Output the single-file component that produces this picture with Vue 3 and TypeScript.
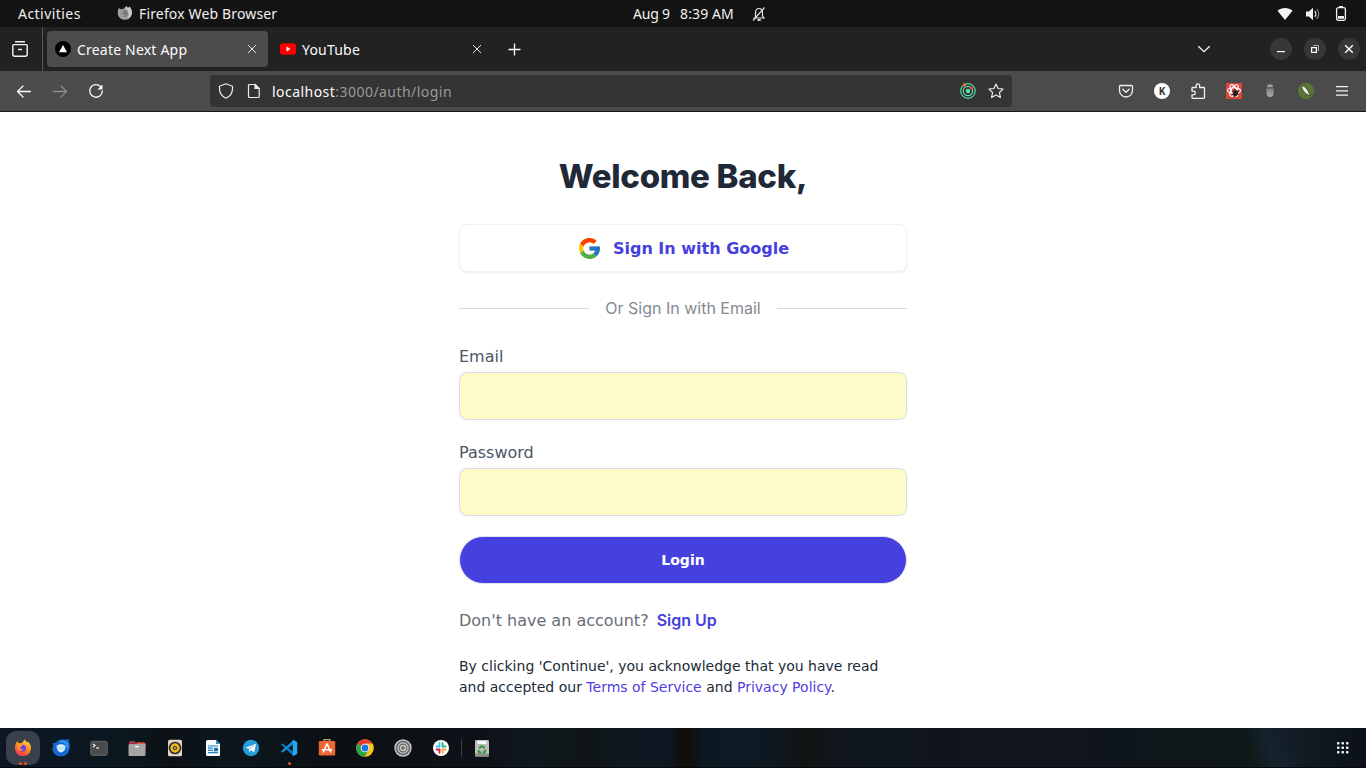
<script setup lang="ts">
import { ref } from 'vue'

interface Tab {
  title: string
  kind: 'next' | 'youtube'
  active: boolean
}

interface DockApp {
  name: string
  dots: number
}

const tabs: Tab[] = [
  { title: 'Create Next App', kind: 'next', active: true },
  { title: 'YouTube', kind: 'youtube', active: false },
]

const dockApps: DockApp[] = [
  { name: 'firefox', dots: 2 },
  { name: 'thunderbird', dots: 0 },
  { name: 'terminal', dots: 0 },
  { name: 'files', dots: 0 },
  { name: 'rhythmbox', dots: 0 },
  { name: 'writer', dots: 0 },
  { name: 'telegram', dots: 0 },
  { name: 'code', dots: 1 },
  { name: 'software', dots: 0 },
  { name: 'chrome', dots: 0 },
  { name: 'settings', dots: 0 },
  { name: 'slack', dots: 0 },
]

const email = ref('')
const password = ref('')
</script>

<template>
  <div class="desktop">
    <header class="topbar">
      <span class="activities">Activities</span>
      <svg class="appicon" width="16" height="16" viewBox="0 0 16 16">
        <path d="M2.200 2.500c.2 1 .6 1.400 1 1.800 1-.4 1.800-.4 2.600 0C7 3.500 8 2.300 10 1c0 1 .5 1.700 1 2.200l1.500-1.700c2.500 3 3 6 2 8.500A7.200 7.200 0 0 1 1 10C.3 7 .9 4.500 2.200 2.500z" fill="#a2a2a2" />
        <path d="M10 1c0 1 .5 1.700 1 2.200l1.500-1.700c2.500 3 3 6 2 8.500-1 2-2.500 3.500-4 4C13 10 12 6 8 3z" fill="#c8c8c8" />
        <circle cx="7.500" cy="8.500" r="3.400" fill="#777" />
        <path d="M3 5.500c2-.8 3.500-.3 4.500.8-.5 1-2 1-2.200 2 .5 1.500 2 2.200 4 1.700C8 12 4.500 12 3.200 9.500z" fill="#999" />
      </svg>
      <span class="appname">Firefox Web Browser</span>
      <span class="date">Aug 9</span>
      <span class="time">8:39 AM</span>
      <svg class="bell" width="16" height="16" viewBox="0 0 16 16" fill="none" stroke="#e8e8e8">
        <path d="M2.500 12h11.500M4.500 11.500V7c0-3 1.500-4.500 3.500-4.500S11.500 4 11.500 7v3l1 1.500" stroke-width="1.200" />
        <path d="M2 14.500 13.500 1.500" stroke-width="1.200" />
        <path d="M6.500 14h3.200" stroke-width="1.800" />
      </svg>
      <div class="status">
        <svg width="16" height="16" viewBox="0 0 16 16"><path d="M.5 4.800C4.500 1 11.500 1 15.500 4.800L8 14z" fill="#f3f3f3" /></svg>
        <svg width="16" height="16" viewBox="0 0 16 16">
          <path d="M1 5.500h3L8 1.700v12.600l-4-3.800H1z" fill="#f3f3f3" />
          <path d="M9.700 5.300c1.500 1.500 1.500 3.900 0 5.400" fill="none" stroke="#eee" stroke-width="1.300" />
          <path d="M11.700 3.200c2.700 2.700 2.700 6.900 0 9.600" fill="none" stroke="#888" stroke-width="1.200" />
        </svg>
        <svg width="16" height="16" viewBox="0 0 16 16">
          <rect x="3.600" y="1.600" width="8.800" height="12.800" rx="1.800" fill="none" stroke="#f3f3f3" stroke-width="1.300" />
          <path d="M6 0h4v1.500H6zM5 10h6v2.700H5z" fill="#f3f3f3" />
        </svg>
      </div>
    </header>

    <nav class="tabstrip">
      <div class="firefoxview">
        <svg width="18" height="18" viewBox="0 0 18 18" fill="none" stroke="#f3f3f3" stroke-width="1.400">
          <path d="M4.500 1.800h9M2.800 4.600h12.400a1 1 0 0 1 1 1v8.600a2 2 0 0 1-2 2H3.800a2 2 0 0 1-2-2V5.600a1 1 0 0 1 1-1z" stroke-linejoin="round" stroke-linecap="round" />
          <path d="M7 9.500h4" />
        </svg>
      </div>
      <div v-for="tab in tabs" :key="tab.title" class="tab" :class="{ active: tab.active }">
        <svg v-if="tab.kind === 'next'" width="16" height="16" viewBox="0 0 16 16">
          <circle cx="8" cy="8" r="8" fill="#000" />
          <path d="M8 4l4 7.200H4z" fill="#fff" />
        </svg>
        <svg v-else width="16" height="16" viewBox="0 0 16 16">
          <rect x="0" y="2.300" width="16" height="11.400" rx="3" fill="#f00" />
          <path d="M6.500 5.600v4.800L10.600 8z" fill="#fff" />
        </svg>
        <span class="tabtitle" :class="tab.kind">{{ tab.title }}</span>
        <svg class="close" width="10" height="10" viewBox="0 0 10 10" stroke="#e6e6e6" stroke-width="1"><path d="M1 1l8 8M9 1L1 9" /></svg>
      </div>
      <svg class="newtab" width="14" height="14" viewBox="0 0 14 14" stroke="#fff" stroke-width="1.300"><path d="M6.500 1.500v12M.5 7.500h12" /></svg>
      <svg class="chevron" width="14" height="14" viewBox="0 0 14 14" fill="none" stroke="#f5f5f5" stroke-width="1.300"><path d="M1.300 4.200 7 9.600l5.700-5.400" /></svg>
      <div class="wincontrols">
        <span class="winbtn"><svg width="10" height="10" viewBox="0 0 10 10"><path d="M1 7h8v1.200H1z" fill="#fff" /></svg></span>
        <span class="winbtn"><svg width="10" height="10" viewBox="0 0 10 10" fill="none"><path d="M3 1.500h5.500V7" stroke="#aaa" /><path d="M1.600 3.600h4.800v4.800H1.600z" stroke="#fff" stroke-width="1.200" /></svg></span>
        <span class="winbtn"><svg width="10" height="10" viewBox="0 0 10 10" stroke="#fff" stroke-width="1.400"><path d="M1.200 1.200l7.600 7.600M8.800 1.200L1.200 8.800" /></svg></span>
      </div>
    </nav>

    <div class="toolbar">
      <div class="navbtns">
        <svg width="16" height="16" viewBox="0 0 16 16" fill="none" stroke="#fbfbfb" stroke-width="1.300" stroke-linecap="round" stroke-linejoin="round"><path d="M14.500 8.500H1.500M7 3 1.500 8.500 7 14" /></svg>
        <svg width="16" height="16" viewBox="0 0 16 16" fill="none" stroke="#8d8d8d" stroke-width="1.300" stroke-linecap="round" stroke-linejoin="round"><path d="M1.500 8.500h13M9 3 14.500 8.500 9 14" /></svg>
        <svg width="16" height="16" viewBox="0 0 16 16" fill="none"><path d="M12.500 3.500A6.300 6.300 0 1 0 14.300 8" stroke="#fbfbfb" stroke-width="1.300" stroke-linecap="round" /><path d="M14.500 1.500v5h-5z" fill="#fbfbfb" /></svg>
      </div>
      <div class="urlbar">
        <svg width="16" height="16" viewBox="0 0 16 16" fill="none" stroke="#ececec" stroke-width="1.200" stroke-linejoin="round"><path d="M8 .8 14.500 3.200v2.300c0 4.700-2.700 8-6.500 9.700C4.200 13.500 1.500 10.200 1.500 5.500V3.200z" /></svg>
        <svg class="pageicon" width="16" height="16" viewBox="0 0 16 16" fill="none" stroke="#ececec" stroke-width="1.200" stroke-linejoin="round"><path d="M3.500 1.500h5.700l4 4v8a1 1 0 0 1-1 1H3.500a1 1 0 0 1-1-1v-11a1 1 0 0 1 1-1z" /><path d="M9 1.500v4h4z" fill="#ececec" /></svg>
        <span class="url"><b>localhost</b>:3000/auth/login</span>
        <svg class="radar" width="16" height="16" viewBox="0 0 16 16" fill="none">
          <circle cx="8" cy="8" r="7.300" stroke="#55d69a" stroke-width="1.200" />
          <circle cx="8" cy="8" r="4.700" stroke="#58dfb0" stroke-width="1.200" />
          <circle cx="8" cy="8" r="2.200" fill="#54e8ac" />
          <circle cx="4.500" cy="1.900" r="1.600" fill="#f37021" /><circle cx="11.400" cy="5" r="1.600" fill="#ef4b32" />
        </svg>
        <svg width="16" height="16" viewBox="0 0 16 16" fill="none" stroke="#ececec" stroke-width="1.200" stroke-linejoin="round"><path d="M8 1l2.100 4.500 5 .6-3.700 3.400 1 5L8 12l-4.400 2.500 1-5L.9 6.100l5-.6z" /></svg>
      </div>
      <div class="extensions">
        <span class="cell"><svg width="16" height="16" viewBox="0 0 16 16" fill="none" stroke="#f3f3f3" stroke-width="1.300" stroke-linecap="round" stroke-linejoin="round"><path d="M2.500 2.500h11a1 1 0 0 1 1 1V7.500a6.500 6.500 0 0 1-13 0V3.500a1 1 0 0 1 1-1z" /><path d="M4.800 6.300 8 9.300l3.200-3" /></svg></span>
        <span class="cell"><span class="kbadge">K</span></span>
        <span class="cell"><svg width="16" height="16" viewBox="0 0 16 16" fill="none" stroke="#f3f3f3" stroke-width="1.300" stroke-linejoin="round"><path d="M2 6.800V5.300a.8.800 0 0 1 .8-.8h3.400V2.500a1.700 1.700 0 0 1 3.400 0v2h4.100a.8.800 0 0 1 .8.800v9.200a.8.800 0 0 1-.8.800H2.800a.8.800 0 0 1-.8-.8v-2.700h1.500a1.800 1.800 0 0 0 0-3.600H2z" /></svg></span>
        <span class="cell"><svg width="16" height="16" viewBox="0 0 16 16" fill="none"><path d="M0 0h16v16H0z" fill="#d9473a" /><g stroke="#fff" stroke-width="1.100"><ellipse cx="8" cy="7.500" rx="6.500" ry="2.800" /><ellipse cx="8" cy="7.500" rx="6.500" ry="2.800" transform="rotate(60 8 7.500)" /><ellipse cx="8" cy="7.500" rx="6.500" ry="2.800" transform="rotate(120 8 7.500)" /></g><ellipse cx="9.500" cy="10.200" rx="2.500" ry="3.200" fill="#301e1c" transform="rotate(35 9.500 10.200)" /><path d="M6 8l7 4M6 12l7-4M9 6v8" stroke="#301e1c" /></svg></span>
        <span class="cell"><svg width="16" height="16" viewBox="0 0 16 16"><defs><linearGradient id="jar" x1="0" y1="0" x2="0" y2="1"><stop offset="0" stop-color="#858585" /><stop offset="1" stop-color="#ababab" /></linearGradient></defs><path d="M5 4.200a3 3 0 0 1 6 0z" fill="#a0a0a0" /><path d="M4.500 5.500h7v4.500a3.500 4 0 0 1-7 0z" fill="url(#jar)" /></svg></span>
        <span class="cell"><svg width="16" height="16" viewBox="0 0 16 16"><circle cx="8" cy="8" r="8" fill="#587832" /><path d="M3.500 3.200c3-.7 5.500 2 9 9.500-5-1.500-8-4.500-9-9.500z" fill="#eee" stroke="#333" stroke-width=".8" /></svg></span>
        <span class="cell"><svg width="16" height="16" viewBox="0 0 16 16" fill="#f5f5f5"><path d="M2 3h12v1.200H2zM2 7.300h12v1.200H2zM2 11.600h12v1.200H2z" /></svg></span>
      </div>
    </div>

    <main class="page">
      <form class="login" @submit.prevent>
        <h1>Welcome Back,</h1>
        <button type="button" class="google">
          <svg width="25" height="25" viewBox="0 0 48 48">
            <path fill="#FFC107" d="M43.611 20.083H42V20H24v8h11.303C33.654 32.657 29.223 36 24 36c-6.627 0-12-5.373-12-12s5.373-12 12-12c3.059 0 5.842 1.154 7.961 3.039l5.657-5.657C34.046 6.053 29.268 4 24 4 12.955 4 4 12.955 4 24s8.955 20 20 20 20-8.955 20-20c0-1.341-.138-2.650-.389-3.917z" />
            <path fill="#FF3D00" d="m6.306 14.691 6.571 4.819C14.655 15.108 18.961 12 24 12c3.059 0 5.842 1.154 7.961 3.039l5.657-5.657C34.046 6.053 29.268 4 24 4 16.318 4 9.656 8.337 6.306 14.691z" />
            <path fill="#4CAF50" d="M24 44c5.166 0 9.860-1.977 13.409-5.192l-6.190-5.238C29.211 35.091 26.715 36 24 36c-5.202 0-9.619-3.317-11.283-7.946l-6.522 5.025C9.505 39.556 16.227 44 24 44z" />
            <path fill="#1976D2" d="M43.611 20.083H42V20H24v8h11.303a12.040 12.040 0 0 1-4.087 5.571l6.193 5.238C36.971 39.205 44 34 44 24c0-1.341-.138-2.650-.389-3.917z" />
          </svg>
          <span>Sign In with Google</span>
        </button>
        <div class="divider"><i></i><span>Or Sign In with Email</span><i></i></div>
        <label for="email">Email</label>
        <input id="email" v-model="email" type="email" />
        <label for="password">Password</label>
        <input id="password" v-model="password" type="password" />
        <button type="submit" class="submit">Login</button>
        <p class="signup">Don't have an account?<a>Sign Up</a></p>
        <p class="terms">By clicking 'Continue', you acknowledge that you have read<br />and accepted our <a>Terms of Service</a> and <a>Privacy Policy</a>.</p>
      </form>
    </main>

    <footer class="dock">
      <div v-for="app in dockApps" :key="app.name" class="dockitem" :class="{ focused: app.name === 'firefox' }">
        <svg width="18" height="18" viewBox="0 0 18 18" fill="none">
          <template v-if="app.name === 'firefox'">
            <defs><linearGradient id="ffx" x1=".8" y1="0" x2=".3" y2="1"><stop offset="0" stop-color="#ffe14a" /><stop offset=".5" stop-color="#ff8a1f" /><stop offset="1" stop-color="#f5305c" /></linearGradient></defs>
            <path d="M3.500 2c.2 1.200.7 1.800 1.300 2.300 1-.4 2-.4 3 0C8.800 2.500 10 1.300 11.500.5c0 1.500 1 2.200 1.800 3l.8-1c2.700 3 3.500 6 2.500 9A8 8 0 0 1 1.200 11C.5 7.500 1.500 4 3.500 2z" fill="url(#ffx)" />
            <circle cx="8.600" cy="9.200" r="3.500" fill="#7543d9" />
            <path d="M3.500 5.500c2-.8 4-.3 5 .8-.5 1.200-2 1-2.300 2.200C6 10 8 11 10 10.300 9 12 5.500 12.500 4 10z" fill="#ff9a2b" />
          </template>
          <template v-else-if="app.name === 'thunderbird'">
            <path d="M1 3.500c1 .8 2 .8 3 0C6 1 9-.3 13 .8L17 0c-.5 1.500-.3 2 0 3 1.300 3 1 6 .2 8A8.700 8.700 0 0 1 .6 11.500c-.4-2 .1-3 .8-4C1 6.200.7 5 1 3.500z" fill="#1668d0" />
            <path d="M6 2.500C9 .5 14 .5 16 4c1 3 .5 6-1 8 .3-4-1-7-4-8z" fill="#2f93ec" />
            <path d="M4.500 7c2-2 6.500-2.500 9 0 0 3.500-1.500 6-4.500 6.500C6 13 4.800 10 4.500 7z" fill="#d4edff" /><path d="M4.800 7.500 9 10.200l4.200-2.700" stroke="#9acbf0" />
          </template>
          <template v-else-if="app.name === 'terminal'">
            <rect x=".8" y="2.300" width="16.400" height="14" rx="1.500" fill="#4b4b4b" stroke="#686868" />
            <path d="M3 5l2 1.500L3 8M6 9h3" stroke="#fff" stroke-width="1.100" />
          </template>
          <template v-else-if="app.name === 'files'">
            <path d="M1 3.500A1.500 1.500 0 0 1 2.500 2h4L8 3.500h8A1.500 1.500 0 0 1 17.500 5v5H1z" fill="#a03149" /><path d="M9 3.500h7A1.500 1.500 0 0 1 17.500 5v3H9z" fill="#e45b37" />
            <rect x=".5" y="5" width="17" height="12" rx="1.200" fill="#a5a5a5" /><path d="M7 7.600h4" stroke="#fff" stroke-width="1.400" />
          </template>
          <template v-else-if="app.name === 'rhythmbox'">
            <rect x="2" y=".8" width="14" height="16.500" rx="1.500" fill="#ded7c9" /><circle cx="9" cy="9" r="6.300" fill="#2c2b28" /><circle cx="9" cy="9" r="3.400" stroke="#efb81b" stroke-width="2.600" /><circle cx="9" cy="9" r="1" fill="#d9c27a" />
          </template>
          <template v-else-if="app.name === 'writer'">
            <path d="M3.500 1H12l4 4v11a1 1 0 0 1-1 1H3a1 1 0 0 1-1-1V2.500A1.500 1.500 0 0 1 3.500 1z" fill="#f4faff" /><path d="M12 1v4h4z" fill="#1e91d5" /><path d="M4 7h10M4 9.200h5M4 11.400h5M4 13.600h10" stroke="#2385bf" stroke-width="1.200" /><path d="M10 8.800h4v3.500h-4z" fill="#1675b3" />
          </template>
          <template v-else-if="app.name === 'telegram'">
            <circle cx="9" cy="9" r="8.200" fill="#279cda" /><path d="M3.500 8.700 14 4.700l-1.800 8.700-3-2.200-1.800 1.700-.5-3.200z" fill="#fff" /><path d="M7 9.800 12 6.500" stroke="#8fc7e7" />
          </template>
          <template v-else-if="app.name === 'code'">
            <path d="M1 5.500 2.500 4.200 13.500 13v4z" fill="#0878bd" /><path d="M1 12.300 2.500 13.700 13.500 5V1z" fill="#198bd2" /><path d="M12.800.8 17.200 3v12l-4.400 2.200z" fill="#28a8f0" />
          </template>
          <template v-else-if="app.name === 'software'">
            <path d="M6 3V1.500a1 1 0 0 1 1-1h4a1 1 0 0 1 1 1V3" stroke="#c19d71" stroke-width="1.500" /><rect x=".8" y="2" width="16.400" height="14.500" rx="1.300" fill="#ef6533" /><path d="M9 4.500l-3.800 9M9 4.500l3.800 9M3.800 10.700h10.400" stroke="#fff" stroke-width="1.600" />
          </template>
          <template v-else-if="app.name === 'chrome'">
            <circle cx="9" cy="9" r="8.800" fill="#fbc51b" /><path d="M9 9 1.400 4.600A8.800 8.800 0 0 1 16.600 4.600H9z" fill="#e53a2d" /><path d="M9 9 1.400 4.600A8.800 8.800 0 0 0 8.500 17.800L12.800 11z" fill="#2da44a" /><circle cx="9" cy="9" r="4.300" fill="#fff" /><circle cx="9" cy="9" r="3.400" fill="#1a73e8" />
          </template>
          <template v-else-if="app.name === 'settings'">
            <circle cx="9" cy="9" r="8.700" fill="#c9c9c9" /><circle cx="9" cy="9" r="6.400" stroke="#5b5b5b" stroke-width="1.300" /><circle cx="9" cy="9" r="7.200" stroke="#777" stroke-width=".8" stroke-dasharray="1.500 1.300" /><circle cx="9" cy="9" r="3.900" stroke="#656565" stroke-width="1.100" /><circle cx="9" cy="9" r="1.700" fill="#666" />
          </template>
          <template v-else>
            <circle cx="9" cy="9" r="8" fill="#fff" /><g stroke-width="1.900" stroke-linecap="round"><path d="M7.500 4v3.200M4.500 7.500h3" stroke="#36c5f0" /><path d="M10.500 4v3.500h3" stroke="#2eb67d" /><path d="M10.500 13.700v-3.200h3" stroke="#ecb22e" /><path d="M4.500 10.500h3v3.200" stroke="#e01e5a" /></g>
          </template>
        </svg>
        <span v-if="app.dots" class="dots"><i v-for="n in app.dots" :key="n"></i></span>
      </div>
      <span class="dockline"></span>
      <div class="dockitem trash">
        <svg width="18" height="18" viewBox="0 0 18 18" fill="none">
          <rect x="2" y="1" width="14" height="16.500" rx="1.300" fill="#bdbdbd" /><path d="M2 14.500h14v2a1 1 0 0 1-1 1H3a1 1 0 0 1-1-1z" fill="#8d8d8d" /><path d="M4.500 2h9v3h-9z" fill="#fafafa" />
          <path d="M6.300 9.500 7.800 7.500h2.400l1.500 2M12.500 10.700l-.9 2.800H9.800M8.300 13.500H6.200l-.8-2.600" stroke="#2c9427" stroke-width="1.800" />
        </svg>
      </div>
      <svg class="appgrid" width="14" height="14" viewBox="0 0 14 14" fill="#f4f4f4">
        <template v-for="r in 3" :key="r"><rect v-for="c in 3" :key="c" :x="c * 4.5 - 3.500" :y="r * 4.5 - 3.500" width="2.500" height="2.500" rx=".7" /></template>
      </svg>
    </footer>
  </div>
</template>

<style>
body { margin: 0; overflow: hidden; }
</style>

<style scoped>
* { box-sizing: border-box; }
svg { display: block; flex: none; }
.desktop { width: 1366px; height: 768px; display: flex; flex-direction: column; overflow: hidden; background: #fff; font-family: "DejaVu Sans", sans-serif; }
.topbar { height: 27px; background: #131313; color: #f0f0f0; display: flex; align-items: center; font: 14px/27px "Noto Sans", sans-serif; white-space: nowrap; flex: none; }
.activities { width: 99px; padding-left: 18px; letter-spacing: .45px; }
.appicon { margin-left: 18px; margin-bottom: 2px; }
.appname { margin-left: 6px; width: 494px; letter-spacing: .15px; }
.date { width: 47px; letter-spacing: -.2px; }
.time { width: 71px; letter-spacing: .12px; }
.date, .time { padding-bottom: 1px; }
.bell { margin-top: 1px; }
.status { margin-left: auto; margin-right: 17px; display: flex; gap: 12px; }

.tabstrip { height: 44px; background: #222; display: flex; align-items: center; flex: none; }
.firefoxview { width: 43px; height: 44px; border-right: 1px solid #585858; display: flex; align-items: center; padding-left: 11px; }
.tab { width: 221px; height: 36px; margin-left: 4px; padding: 0 11px 0 8px; border-radius: 4px; display: flex; align-items: center; color: #fbfbfb; font: 14px/36px "Noto Sans", sans-serif; }
.tab.active { background: #4c4c4c; }
.tabtitle { margin-left: 6px; padding-top: 2px; flex: 1; white-space: nowrap; letter-spacing: .2px; }
.newtab { margin-left: 15px; }
.chevron { margin-left: 675px; }
.wincontrols { display: flex; gap: 12px; margin-left: auto; margin-right: 6px; }
.winbtn { width: 22px; height: 22px; border-radius: 50%; background: #373737; display: flex; align-items: center; justify-content: center; }

.toolbar { height: 41px; background: #4b4b4b; border-bottom: 1px solid #171717; display: flex; align-items: center; flex: none; }
.navbtns { width: 210px; padding-left: 16px; display: flex; gap: 20px; }
.urlbar { width: 802px; height: 32px; border-radius: 4px; background: #343434; padding: 0 8px; display: flex; align-items: center; }
.pageicon { margin-left: 12px; }
.url { flex: 1; margin-left: 10px; padding-top: 2px; font: 14px/32px "Noto Sans", sans-serif; color: #9a9a9a; letter-spacing: .46px; }
.url b { font-weight: 400; color: #fbfbfb; }
.radar { margin-right: 12px; }
.extensions { display: flex; margin-left: auto; margin-right: 6px; }
.cell { width: 36px; height: 36px; display: flex; align-items: center; justify-content: center; }
.kbadge { width: 16px; height: 16px; border-radius: 50%; background: #fff; color: #333; font: 700 10px/16px "Noto Sans", sans-serif; text-align: center; }

.page { height: 616px; flex: none; display: flex; justify-content: center; background: #fff; }
.login { width: 448px; display: flex; flex-direction: column; }
h1 { margin: 44px 0 28px; height: 40px; font: 850 33px/40px Inter, sans-serif; letter-spacing: -.3px; color: #1f2937; text-align: center; white-space: nowrap; }
.google { height: 48px; border: 1px solid #f0f0f2; border-radius: 8px; background: #fff; box-shadow: 0 1px 2px rgba(0, 0, 0, .07); display: flex; align-items: center; justify-content: center; gap: 11px; padding: 0; color: #4640de; font: 700 16px/24px "DejaVu Sans", sans-serif; }
.google span { padding-top: 2px; }
.divider { height: 24px; margin: 24px 0; display: flex; align-items: center; gap: 16px; font: 16px/24px Inter, sans-serif; color: #858991; white-space: nowrap; }
.divider i { flex: 1; height: 1px; background: #d5dae6; }
label { height: 24px; margin-bottom: 4px; padding-top: 1px; font-size: 16px; line-height: 24px; color: #4b5563; }
input { width: 448px; height: 48px; margin: 0 0 20px; border: 1px solid #d5dae6; border-radius: 8px; background: #fffbc8; padding: 0 12px; font-size: 16px; outline: none; }
.submit { height: 48px; border: 1px solid #e2e4ed; border-radius: 24px; background: #4640de; color: #fff; font: 700 14px/20px "DejaVu Sans", sans-serif; padding: 0; }
.signup { height: 24px; margin: 24px 0 0; font-size: 16px; line-height: 24px; color: #686d76; }
.signup a { margin-left: 8px; font: 600 16px/24px Inter, sans-serif; color: #4640de; }
.terms { margin: 24px 0 0; font-size: 14px; line-height: 21px; color: #202b38; white-space: nowrap; }
.terms a { color: #4f3fdd; }

.dock { height: 40px; flex: none; display: flex; align-items: center; padding-left: 4px; background: linear-gradient(76deg, transparent 1215px, #1a293588 1238px, transparent 1256px), linear-gradient(90deg, #0c1723 0, #0b1820 120px, #0c1116 170px, #0b171d 235px, #0c1015 330px, #0e1117 470px, #0e191e 540px, #101515 585px, #0d1820 620px, #0d1823 668px, #110f0e 680px, #100f0e 691px, #0d1920 705px, #0c1a27 740px, #0e191f 775px, #101412 803px, #10161d 840px, #0e171d 890px, #10151c 930px, #0f161b 1120px, #0f171b 1220px, #0e1918 1250px, #131e29 1285px, #0e191e 1320px, #0b1017 1366px); border-bottom: 1px solid #07080c; }
.dockitem { position: relative; width: 38px; height: 40px; display: flex; align-items: center; justify-content: center; flex: none; }
.focused { width: 34px; height: 34px; margin: 0 2px; border-radius: 10px; background: #3b414a; }
.dots { position: absolute; left: 0; right: 0; bottom: 3px; display: flex; gap: 2px; justify-content: center; }
.focused .dots { bottom: 0; }
.dots i { width: 3px; height: 3px; border-radius: 50%; background: #e95420; }
.dockline { width: 1px; height: 18px; background: #3b3f42; margin-left: 1px; }
.trash { margin-left: 1px; }
.appgrid { margin-left: auto; margin-right: 16px; }
</style>
